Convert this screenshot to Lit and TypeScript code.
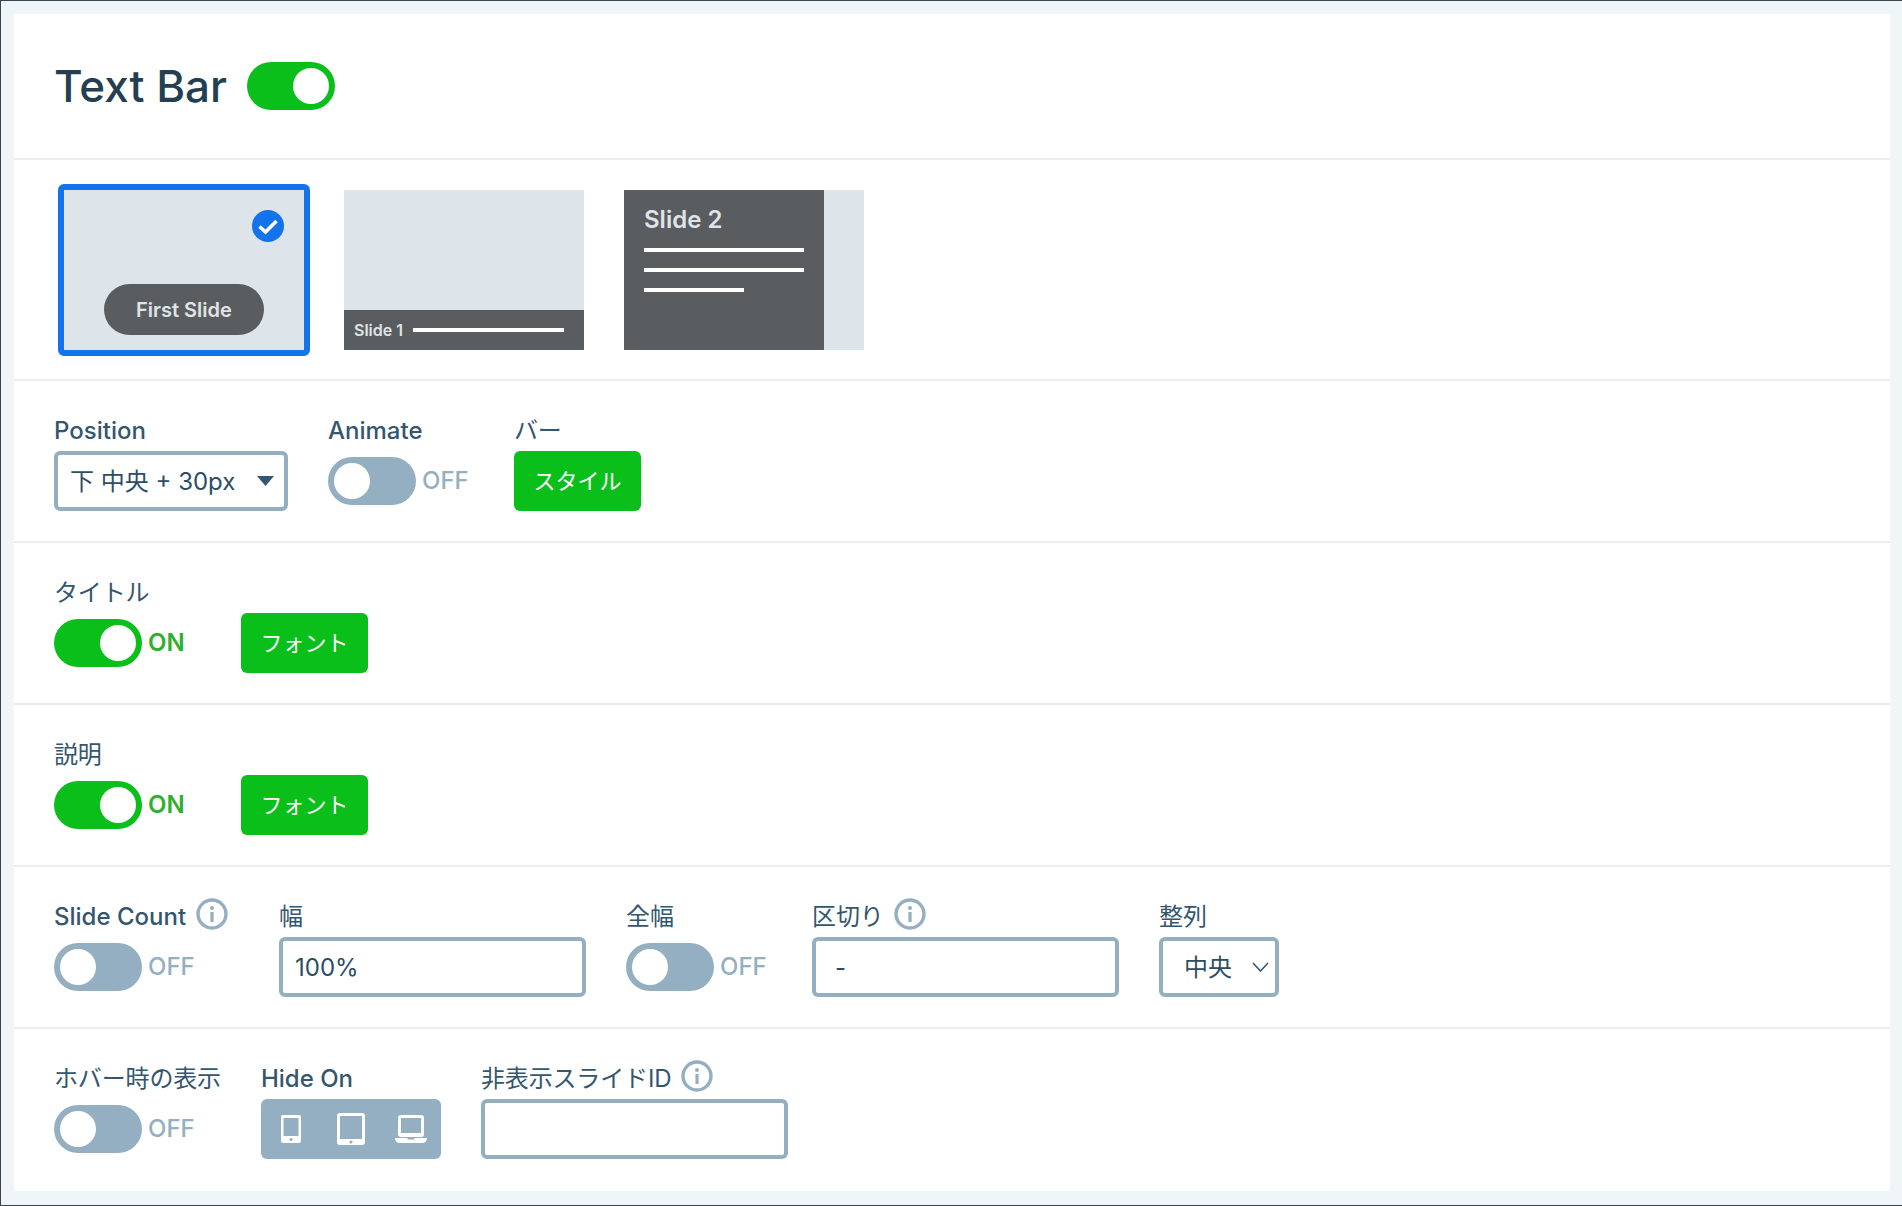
import { LitElement, css, html, svg } from 'lit';
import { customElement, property } from 'lit/decorators.js';

const caretSolid =
  "url(\"data:image/svg+xml,%3Csvg xmlns='http://www.w3.org/2000/svg' width='17' height='10'%3E%3Cpath d='M0 0h17l-8.5 10z' fill='%2334566f'/%3E%3C/svg%3E\")";
const caretLine =
  "url(\"data:image/svg+xml,%3Csvg xmlns='http://www.w3.org/2000/svg' width='17' height='10'%3E%3Cpath d='M1 1l7.5 8 7.5-8' fill='none' stroke='%2334566f' stroke-width='1.6'/%3E%3C/svg%3E\")";

@customElement('ui-toggle')
export class UiToggle extends LitElement {
  @property({ type: Boolean }) on = false;
  @property({ type: Boolean }) bare = false;

  static styles = css`
    :host {
      display: flex;
      align-items: center;
      height: 60px;
    }
    :host([bare]) {
      height: 48px;
    }
    .track {
      width: 88px;
      height: 48px;
      box-sizing: border-box;
      border-radius: 24px;
      background: #94afc1;
      padding: 6px;
      display: flex;
      flex: none;
    }
    .track.on {
      background: #0abf1a;
      justify-content: flex-end;
    }
    .knob {
      width: 36px;
      height: 36px;
      border-radius: 50%;
      background: #fff;
    }
    .state {
      margin-left: 6px;
      padding-bottom: 1px;
      font-size: 24px;
      font-weight: 500;
      color: #94afc1;
    }
    .state.on {
      color: #2fb02d;
      font-weight: 600;
    }
  `;

  render() {
    return html`
      <div class="track ${this.on ? 'on' : ''}"><div class="knob"></div></div>
      ${this.bare
        ? ''
        : html`<span class="state ${this.on ? 'on' : ''}">${this.on ? 'ON' : 'OFF'}</span>`}
    `;
  }
}

@customElement('app-root')
export class AppRoot extends LitElement {
  static styles = css`
    :host {
      display: block;
      box-sizing: border-box;
      height: 1206px;
      padding: 13px 12px 14px 13px;
      background: #f0f5f8;
      border: solid #39444d;
      border-width: 1px 0 1px 1px;
      font-family: Inter, 'Noto Sans CJK JP', sans-serif;
      color: #34566f;
    }
    .card {
      background: #fff;
      border-radius: 4px;
      height: 100%;
    }
    .head {
      height: 146px;
      box-sizing: border-box;
      padding-left: 40px;
      display: flex;
      align-items: center;
      gap: 20px;
      border-bottom: 2px solid #e9edf0;
    }
    h1 {
      margin: 0;
      font-size: 44px;
      font-weight: 500;
      color: #243f52;
    }
    .thumbs {
      height: 221px;
      box-sizing: border-box;
      padding: 24px 0 0 44px;
      display: flex;
      gap: 28px;
      border-bottom: 2px solid #e9edf0;
    }
    .thumb {
      position: relative;
      width: 252px;
      height: 172px;
      box-sizing: border-box;
      border: 6px solid transparent;
      border-radius: 6px;
    }
    .thumb.selected {
      border-color: #1273eb;
    }
    .frame {
      height: 160px;
      background: #dde4ea;
      overflow: hidden;
      display: flex;
      flex-direction: column;
    }
    .check {
      position: absolute;
      top: 20px;
      right: 20px;
      width: 32px;
      height: 32px;
    }
    .frame.pill {
      align-items: center;
      justify-content: flex-end;
      padding-bottom: 15px;
      box-sizing: border-box;
    }
    .pill-label {
      width: 160px;
      height: 51px;
      border-radius: 26px;
      background: #5a5d60;
      color: #dfe4e8;
      font-size: 20px;
      font-weight: 600;
      display: flex;
      align-items: center;
      justify-content: center;
    }
    .frame.strip {
      justify-content: flex-end;
    }
    .strip-bar {
      height: 40px;
      background: #5a5d60;
      color: #dfe4e8;
      box-sizing: border-box;
      padding: 0 20px 0 10px;
      display: flex;
      align-items: center;
      gap: 10px;
      font-size: 16px;
      font-weight: 600;
    }
    .rule {
      flex: 1;
      height: 4px;
      background: #fff;
    }
    .frame.side {
      flex-direction: row;
    }
    .side-panel {
      width: 200px;
      box-sizing: border-box;
      padding: 15px 20px 0;
      background: #5a5d60;
      color: #dfe4e8;
      font-size: 24px;
      font-weight: 600;
      line-height: 30px;
      display: flex;
      flex-direction: column;
      gap: 16px;
    }
    .side-panel span {
      margin-bottom: -3px;
    }
    .side-panel .rule {
      flex: none;
    }
    .side-panel .rule.short {
      width: 100px;
    }
    .row {
      height: 162px;
      box-sizing: border-box;
      padding: 30px 0 0 40px;
      display: flex;
      gap: 40px;
      border-bottom: 2px solid #e9edf0;
    }
    .row.last {
      height: 158px;
      border-bottom: 0;
    }
    .field {
      display: flex;
      flex-direction: column;
    }
    .label {
      height: 40px;
      box-sizing: border-box;
      padding-bottom: 1px;
      font-size: 24px;
      font-weight: 500;
      display: flex;
      align-items: center;
      white-space: nowrap;
    }
    .label.jp {
      font-weight: 400;
      padding-bottom: 5px;
      letter-spacing: -0.15px;
    }
    .info {
      width: 32px;
      height: 32px;
      margin: -6px 11px 0 10px;
      flex: none;
    }
    .jp .info {
      margin-top: -1px;
    }
    .box {
      height: 60px;
      box-sizing: border-box;
      border: 4px solid #94afc1;
      border-radius: 6px;
      background: #fff;
      font: inherit;
      font-size: 24px;
      color: #2d4d64;
      outline: none;
      padding: 0 12px;
      margin: 0;
    }
    select.box {
      appearance: none;
      background-repeat: no-repeat;
      font-size: 24px;
      padding-left: 12px;
    }
    select.position {
      width: 234px;
      background-image: ${css([caretSolid] as unknown as TemplateStringsArray)};
      background-position: right 10px center;
    }
    select.align {
      width: 120px;
      padding-left: 21px;
      background-image: ${css([caretLine] as unknown as TemplateStringsArray)};
      background-position: right 6px center;
    }
    input.box {
      width: 307px;
    }
    input.box.sep {
      padding-left: 19px;
    }
    .btn {
      width: 127px;
      height: 60px;
      box-sizing: border-box;
      padding-bottom: 5px;
      border-radius: 6px;
      background: #0abf1a;
      color: #fff;
      font-size: 22px;
      display: flex;
      align-items: center;
      justify-content: center;
    }
    .field.tog {
      width: 146px;
    }
    .field.tog.wide {
      width: 147px;
    }
    .devices {
      width: 180px;
      height: 60px;
      box-sizing: border-box;
      border-radius: 6px;
      background: #94afc1;
      padding-left: 20px;
      display: flex;
      align-items: center;
    }
    .devices svg {
      display: block;
      flex: none;
    }
    .devices .phone {
      margin-right: 36px;
    }
    .devices .tablet {
      margin-right: 30px;
    }
  `;

  private info() {
    return html`<svg class="info" viewBox="0 0 32 32">
      <circle cx="16" cy="16" r="14" fill="none" stroke="#94afc1" stroke-width="3.4"></circle>
      <rect x="14.4" y="14" width="3.2" height="10" fill="#94afc1"></rect>
      <circle cx="16" cy="10" r="2" fill="#94afc1"></circle>
    </svg>`;
  }

  private check() {
    return html`<svg class="check" viewBox="0 0 32 32">
      <circle cx="16" cy="16" r="16" fill="#1273eb"></circle>
      <path d="M7.5 16.5l6 5.5L24.5 11" fill="none" stroke="#fff" stroke-width="3.6"></path>
    </svg>`;
  }

  private devices() {
    const phone = svg`<rect width="20" height="28" rx="2" fill="#fff"></rect>
      <rect x="2.5" y="3" width="15" height="18" fill="#94afc1"></rect>
      <circle cx="10" cy="24.5" r="1.6" fill="#94afc1"></circle>`;
    const tablet = svg`<rect width="28" height="32" rx="3" fill="#fff"></rect>
      <rect x="3" y="3" width="22" height="23" fill="#94afc1"></rect>
      <circle cx="14" cy="29" r="1.6" fill="#94afc1"></circle>`;
    const laptop = svg`<rect x="3" width="26" height="22" rx="3" fill="#fff"></rect>
      <rect x="6" y="3" width="20" height="15" fill="#94afc1"></rect>
      <path d="M0 23h12.5v1.5h7V23H32c0 3-2 5-5 5H5c-3 0-5-2-5-5z" fill="#fff"></path>`;
    return html`<div class="devices">
      <svg class="phone" width="20" height="28" viewBox="0 0 20 28">${phone}</svg>
      <svg class="tablet" width="28" height="32" viewBox="0 0 28 32">${tablet}</svg>
      <svg width="32" height="28" viewBox="0 0 32 28">${laptop}</svg>
    </div>`;
  }

  render() {
    return html`
      <div class="card">
        <div class="head">
          <h1>Text Bar</h1>
          <ui-toggle on bare></ui-toggle>
        </div>

        <div class="thumbs">
          <div class="thumb selected">
            <div class="frame pill"><div class="pill-label">First Slide</div></div>
            ${this.check()}
          </div>
          <div class="thumb">
            <div class="frame strip">
              <div class="strip-bar"><span>Slide 1</span><div class="rule"></div></div>
            </div>
          </div>
          <div class="thumb">
            <div class="frame side">
              <div class="side-panel">
                <span>Slide 2</span>
                <div class="rule"></div>
                <div class="rule"></div>
                <div class="rule short"></div>
              </div>
            </div>
          </div>
        </div>

        <div class="row">
          <div class="field">
            <div class="label">Position</div>
            <select class="box position"><option>下 中央 + 30px</option></select>
          </div>
          <div class="field tog">
            <div class="label">Animate</div>
            <ui-toggle></ui-toggle>
          </div>
          <div class="field">
            <div class="label jp">バー</div>
            <div class="btn">スタイル</div>
          </div>
        </div>

        <div class="row">
          <div class="field tog wide">
            <div class="label jp">タイトル</div>
            <ui-toggle on></ui-toggle>
          </div>
          <div class="field">
            <div class="label">&nbsp;</div>
            <div class="btn">フォント</div>
          </div>
        </div>

        <div class="row">
          <div class="field tog wide">
            <div class="label jp">説明</div>
            <ui-toggle on></ui-toggle>
          </div>
          <div class="field">
            <div class="label">&nbsp;</div>
            <div class="btn">フォント</div>
          </div>
        </div>

        <div class="row">
          <div class="field">
            <div class="label">Slide Count${this.info()}</div>
            <ui-toggle></ui-toggle>
          </div>
          <div class="field">
            <div class="label jp">幅</div>
            <input class="box" .value=${'100%'} />
          </div>
          <div class="field tog">
            <div class="label jp">全幅</div>
            <ui-toggle></ui-toggle>
          </div>
          <div class="field">
            <div class="label jp">区切り${this.info()}</div>
            <input class="box sep" .value=${'-'} />
          </div>
          <div class="field">
            <div class="label jp">整列</div>
            <select class="box align"><option>中央</option></select>
          </div>
        </div>

        <div class="row last">
          <div class="field">
            <div class="label jp">ホバー時の表示</div>
            <ui-toggle></ui-toggle>
          </div>
          <div class="field">
            <div class="label">Hide On</div>
            ${this.devices()}
          </div>
          <div class="field">
            <div class="label jp">非表示スライドID${this.info()}</div>
            <input class="box" />
          </div>
        </div>
      </div>
    `;
  }
}
